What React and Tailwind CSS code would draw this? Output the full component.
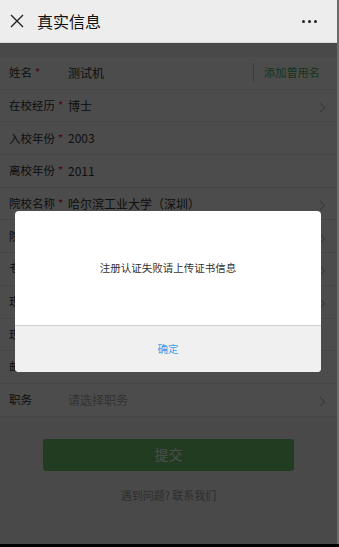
import React from 'react';

const rows = [
  { label: '姓名', required: true, value: '测试机', extra: true },
  { label: '在校经历', required: true, value: '博士', arrow: true },
  { label: '入校年份', required: true, value: '2003' },
  { label: '离校年份', required: true, value: '2011' },
  { label: '院校名称', required: true, value: '哈尔滨工业大学（深圳）', arrow: true },
  { label: '院系名称', required: true, value: '计算机学院', arrow: true },
  { label: '专业名称', required: true, value: '计算机科学与技术', arrow: true },
  { label: '现居城市', required: false, value: '深圳', arrow: true },
  { label: '现工作单位', required: false, value: '' },
  { label: '邮箱', required: false, value: '' },
  { label: '职务', required: false, value: '', placeholder: '请选择职务', arrow: true },
];

const Chevron = () => (
  <svg width="7" height="11" viewBox="0 0 7 11" className="shrink-0">
    <path d="M1 1l4.5 4.5L1 10" fill="none" stroke="#c7c7cc" strokeWidth="1.2" />
  </svg>
);

const Row = ({ row }) => (
  <div className="h-[32.7px] flex items-center pl-[9px] pr-[11px] border-b border-[#ececec] bg-white">
    <div className="w-[59px] shrink-0 flex items-center text-[11.5px] text-[#333] whitespace-nowrap">
      <span>{row.label}</span>
      {row.required && <span className="text-[#e02020] ml-[3px]">*</span>}
    </div>
    <div className={`flex-1 text-[12px] whitespace-nowrap overflow-hidden ${row.value ? 'text-[#333]' : 'text-[#aaa]'}`}>
      {row.value || row.placeholder}
    </div>
    {row.extra && (
      <div className="flex items-center h-full mr-[6px]">
        <div className="w-px h-[19px] bg-[#ccc] mr-[10px]" />
        <span className="text-[11.2px] text-[#4caf50]">添加曾用名</span>
      </div>
    )}
    {row.arrow && <div className="mt-[4px]"><Chevron /></div>}
  </div>
);

export default function App() {
  return (
    <div
      className="w-[339px] h-[547px] overflow-hidden flex flex-col bg-black"
      style={{ fontFamily: '"Noto Sans CJK SC", "Noto Sans", sans-serif' }}
    >
      <div className="flex flex-1 min-h-0">
        <div className="w-[337px] flex flex-col relative">
          {/* title bar */}
          <div className="h-[43px] shrink-0 bg-[#ededed] flex items-center pl-[10px] pr-[20px] border-b border-[#d9d9d9]">
            <svg width="14" height="14" viewBox="0 0 14 14">
              <path d="M1 1l12 12M13 1L1 13" stroke="#222" strokeWidth="1.4" />
            </svg>
            <span className="ml-[13px] text-[16px] text-[#111]">真实信息</span>
            <div className="ml-auto flex gap-[3px]">
              <span className="w-[3px] h-[3px] rounded-full bg-[#222]" />
              <span className="w-[3px] h-[3px] rounded-full bg-[#222]" />
              <span className="w-[3px] h-[3px] rounded-full bg-[#222]" />
            </div>
          </div>

          {/* page */}
          <div className="flex-1 bg-[#f4f4f4] relative">
            <div className="pt-[14px]">
              {rows.map((r) => (
                <Row key={r.label} row={r} />
              ))}
            </div>
            <div className="px-[43px] pt-[22px]">
              <button className="w-full h-[32px] rounded-[3px] bg-[#6fc86f] text-white text-[14px]">
                提交
              </button>
            </div>
            <div className="text-center text-[11px] text-[#999] mt-[16px]">遇到问题? 联系我们</div>

            {/* mask */}
            <div className="absolute inset-0 bg-black/70" />

            {/* dialog */}
            <div className="absolute left-[15px] top-[168px] w-[306px] rounded-[4px] overflow-hidden bg-white">
              <div className="h-[115px] flex items-center justify-center text-[10.5px] text-[#333] border-b border-[#cfcfcf]">
                注册认证失败请上传证书信息
              </div>
              <div className="h-[46px] bg-[#f0f0f0] flex items-center justify-center text-[10.5px] text-[#3c9ee5]">
                确定
              </div>
            </div>
          </div>
        </div>
        <div className="w-[2px] bg-[#6b6b6b]" />
      </div>
      <div className="h-[3px] bg-black" />
    </div>
  );
}
